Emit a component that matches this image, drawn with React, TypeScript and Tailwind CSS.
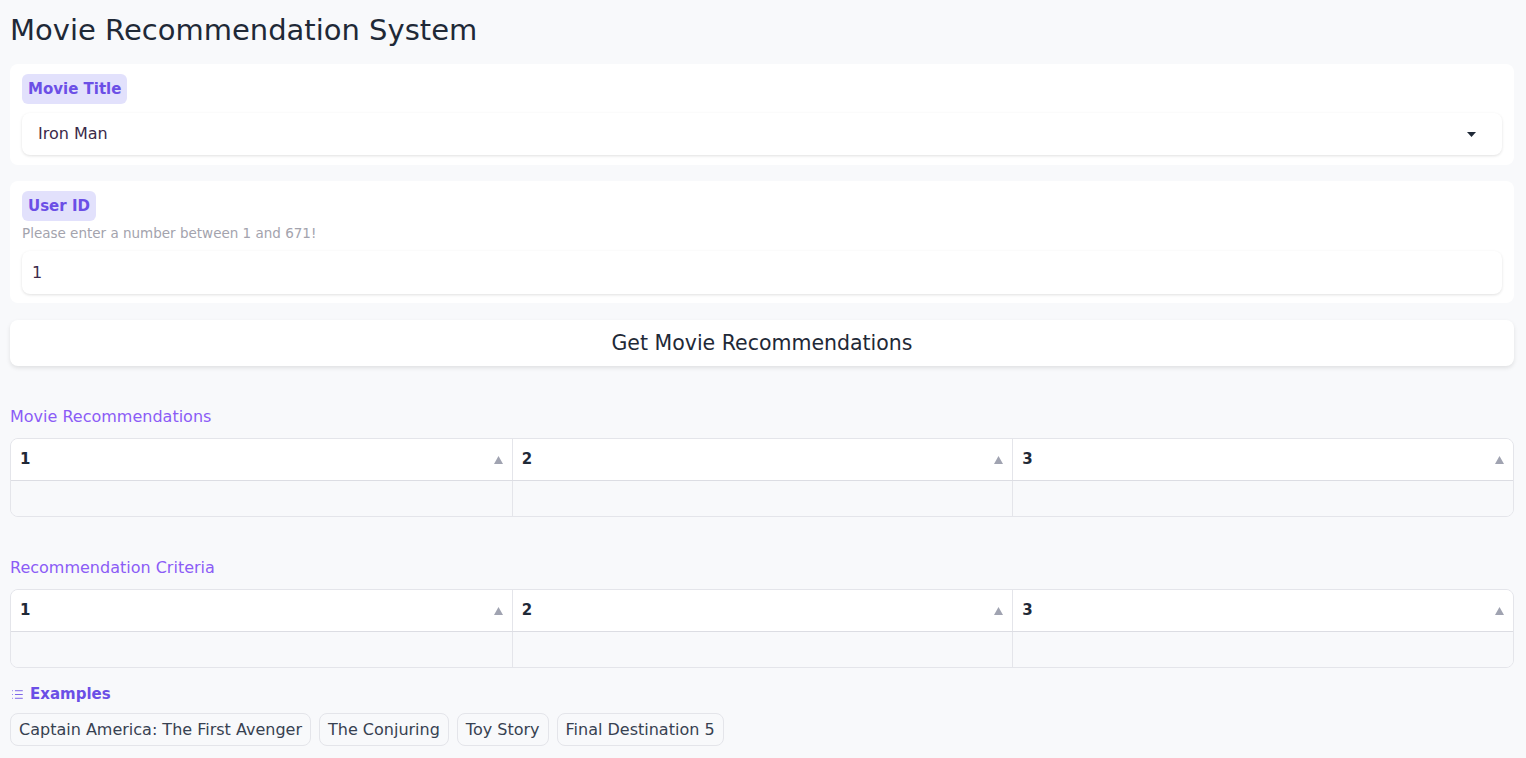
import { List } from 'lucide-react'

const font = { fontFamily: '"DejaVu Sans", sans-serif' }

function Badge({ label }: { label: string }) {
  return (
    <span className="inline-flex h-[30px] items-center self-start rounded-[6px] bg-[#e2e1fc] px-[6px] text-[15px] font-semibold text-[#6b4fe6]">
      {label}
    </span>
  )
}

function SortArrow() {
  return (
    <svg width="9" height="8" viewBox="0 0 9 8" className="shrink-0">
      <path d="M4.5 0 L9 8 L0 8 Z" fill="#a0a3b1" />
    </svg>
  )
}

function ResultTable({ title }: { title: string }) {
  return (
    <div className="flex flex-col">
      <div className="h-[20px] text-[16px] leading-[20px] text-[#8b5cf6]">{title}</div>
      <div className="mt-[11px] overflow-hidden rounded-[8px] border border-[#e4e5ea]">
        <div className="grid grid-cols-3 border-b border-[#dcdde3] bg-white">
          {['1', '2', '3'].map((c, i) => (
            <div
              key={c}
              className={`flex h-[41px] items-center justify-between pl-[9px] pr-[9px] text-[15px] font-bold text-[#1f2937] ${i > 0 ? 'border-l border-[#e4e5ea]' : ''}`}
            >
              <span>{c}</span>
              <SortArrow />
            </div>
          ))}
        </div>
        <div className="grid grid-cols-3 bg-[#f8f9fb]">
          {[0, 1, 2].map((i) => (
            <div key={i} className={`h-[35px] ${i > 0 ? 'border-l border-[#e4e5ea]' : ''}`} />
          ))}
        </div>
      </div>
    </div>
  )
}

export default function App() {
  const examples = ['Captain America: The First Avenger', 'The Conjuring', 'Toy Story', 'Final Destination 5']
  return (
    <div className="min-h-screen bg-[#f8f9fb] pt-[12px] pl-[10px] pr-[12px] pb-6 text-[#1f2937]" style={font}>
      <h1 className="mb-[16px] text-[29px] leading-[36px] font-medium text-[#1f2937]">
        Movie Recommendation System
      </h1>

      <div className="flex flex-col rounded-[8px] bg-white px-[12px] pt-[10px] pb-[10px]">
        <Badge label="Movie Title" />
        <div className="mt-[9px] flex h-[42px] items-center justify-between rounded-[8px] bg-white pl-[16px] pr-[26px] shadow-[0_1px_3px_rgba(0,0,0,0.12)]">
          <span className="text-[16px] text-[#3b2a4a]">Iron Man</span>
          <svg width="9" height="5" viewBox="0 0 9 5">
            <path d="M0 0 L9 0 L4.5 5 Z" fill="#1f2937" />
          </svg>
        </div>
      </div>

      <div className="mt-[16px] flex flex-col rounded-[8px] bg-white px-[12px] pt-[10px] pb-[9px]">
        <Badge label="User ID" />
        <div className="mt-[3px] h-[18px] text-[13.5px] leading-[18px] text-[#a3a3ad]">
          Please enter a number between 1 and 671!
        </div>
        <div className="mt-[9px] flex h-[43px] items-center rounded-[8px] bg-white pl-[10px] shadow-[0_1px_3px_rgba(0,0,0,0.12)]">
          <span className="text-[16px] text-[#3b2a4a]">1</span>
        </div>
      </div>

      <button className="mt-[17px] flex h-[46px] w-full items-center justify-center rounded-[8px] bg-white text-[20.5px] font-medium text-[#1f2937] shadow-[0_2px_4px_rgba(0,0,0,0.1)]">
        Get Movie Recommendations
      </button>

      <div className="mt-[41px]">
        <ResultTable title="Movie Recommendations" />
      </div>

      <div className="mt-[41px]">
        <ResultTable title="Recommendation Criteria" />
      </div>

      <div className="mt-[16px] flex h-[20px] items-center gap-[6px] pl-[1px] text-[#6b4fe6]">
        <List size={13} strokeWidth={1.6} />
        <span className="text-[15px] font-semibold">Examples</span>
      </div>

      <div className="mt-[9px] flex gap-[8px]">
        {examples.map((e) => (
          <div
            key={e}
            className="flex h-[33px] items-center rounded-[8px] border border-[#e4e5ea] bg-[#f8f9fb] px-[8px] text-[16px] text-[#374151]"
          >
            {e}
          </div>
        ))}
      </div>
    </div>
  )
}
